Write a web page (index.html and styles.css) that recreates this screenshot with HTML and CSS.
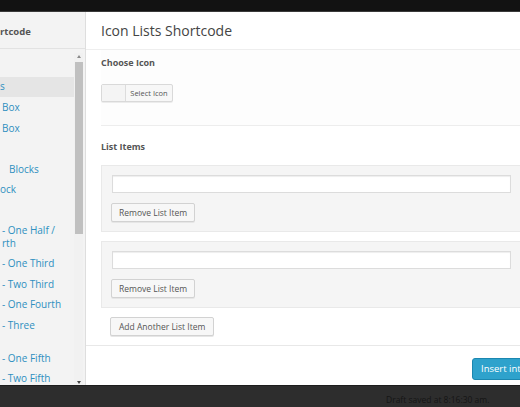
FILE: index.html
```html
<!DOCTYPE html>
<html>
<head>
<meta charset="utf-8">
<link rel="stylesheet" href="styles.css">
</head>
<body>
<div class="topbar"></div>
<div class="modal">
  <aside class="sidebar">
    <div class="side-head">rtcode</div>
    <div class="side-body">
      <ul class="side-list">
        <li class="active">s</li>
        <li class="ind2">Box</li>
        <li class="ind2">Box</li>
        <li>&nbsp;</li>
        <li class="ind9">Blocks</li>
        <li>ock</li>
        <li>&nbsp;</li>
        <li class="ind2">- One Half /<br>rth</li>
        <li class="ind2">- One Third</li>
        <li class="ind2">- Two Third</li>
        <li class="ind2">- One Fourth</li>
        <li class="ind2">- Three<br>&nbsp;</li>
        <li class="ind2">- One Fifth</li>
        <li class="ind2">- Two Fifth</li>
      </ul>
      <div class="scrollbar">
        <span class="arrow up"></span>
        <span class="thumb"></span>
        <span class="arrow down"></span>
      </div>
    </div>
  </aside>
  <main class="main">
    <header class="main-head"><h1 class="title">Icon Lists Shortcode</h1></header>
    <div class="content">
      <section class="section first">
        <div class="label">Choose Icon</div>
        <div class="icon-picker"><span class="icon-preview"></span><span class="icon-btn">Select Icon</span></div>
      </section>
      <section class="section">
        <div class="label">List Items</div>
        <div class="item-box">
          <div class="text-input"></div>
          <button class="btn">Remove List Item</button>
        </div>
        <div class="item-box">
          <div class="text-input"></div>
          <button class="btn">Remove List Item</button>
        </div>
        <button class="btn add">Add Another List Item</button>
      </section>
    </div>
    <footer class="main-foot"><button class="primary">Insert into Post</button></footer>
  </main>
</div>
<div class="bottombar"><span class="draft">Draft saved at 8:16:30 am.</span></div>
</body>
</html>
```
FILE: styles.css
```css
* { box-sizing: border-box; }
html, body { margin: 0; padding: 0; }
body {
  width: 520px;
  height: 407px;
  overflow: hidden;
  background: #2d2d2d;
  font-family: "Open Sans", "DejaVu Sans", sans-serif;
}
.topbar {
  height: 12px;
  background: #121212;
  border-bottom: 1px solid #3a3a3a;
}
.modal {
  height: 373px;
  display: flex;
  background: #fff;
}
.sidebar {
  width: 86px;
  flex: none;
  background: #f3f3f3;
  border-right: 1px solid #dedede;
  display: flex;
  flex-direction: column;
  overflow: hidden;
}
.side-head {
  height: 37px;
  border-bottom: 1px solid #e2e2e2;
  font-size: 9.5px;
  font-weight: 700;
  color: #555;
  line-height: 37px;
  padding-top: 1px;
}
.side-body {
  flex: 1;
  display: flex;
  padding-top: 4px;
}
.side-list {
  list-style: none;
  margin: 0;
  padding: 24px 0 0;
  flex: 1;
  font-size: 10px;
  color: #2e8fc0;
  white-space: nowrap;
}
.side-list li {
  line-height: 12.5px;
  padding: 4px 0;
}
.side-list li.active {
  background: #e5e5e5;
  padding: 3px 0 4px;
  height: 20px;
  line-height: 13px;
}
.ind2 { padding-left: 2px !important; }
.ind9 { padding-left: 9px !important; }
.scrollbar {
  width: 9px;
  margin-right: 2px;
  display: flex;
  flex-direction: column;
  align-items: center;
  background: #f1f1f1;
}
.arrow {
  width: 0;
  height: 0;
  border-left: 2.5px solid transparent;
  border-right: 2.5px solid transparent;
}
.arrow.up { border-bottom: 3px solid #8a8a8a; margin-top: 2px; }
.arrow.down { border-top: 3px solid #444; margin-top: auto; margin-bottom: 5px; }
.thumb {
  width: 8px;
  height: 172px;
  margin-top: 4px;
  background: #c0c0c0;
}
.main {
  flex: 1;
  display: flex;
  flex-direction: column;
  overflow: hidden;
}
.main-head {
  height: 38px;
  border-bottom: 1px solid #eeeeee;
  padding-left: 15px;
  flex: none;
}
.title {
  margin: 0;
  font-size: 14px;
  font-weight: 400;
  color: #444;
  line-height: 38px;
}
.content {
  flex: 1;
  padding-left: 15px;
  overflow: hidden;
}
.section.first {
  padding-top: 6px;
  height: 76px;
  border-bottom: 1px solid #ededed;
  background: #fdfdfd;
}
.label {
  font-size: 9px;
  font-weight: 700;
  color: #555;
  line-height: 14px;
}
.section.first .label { margin-bottom: 14px; }
.section:not(.first) { padding-top: 14px; }
.section:not(.first) .label { margin-bottom: 11px; }
.icon-picker {
  display: flex;
  width: 72px;
  height: 18px;
  border: 1px solid #d9d9d9;
  border-radius: 2px;
  background: #f7f7f7;
  box-shadow: 0 1px 0 #ececec;
}
.icon-preview {
  width: 24px;
  border-right: 1px solid #dcdcdc;
  background: #f4f4f4;
}
.icon-btn {
  flex: 1;
  font-size: 7.5px;
  color: #555;
  line-height: 16px;
  text-align: center;
}
.item-box {
  width: 421px;
  height: 67px;
  background: #f5f5f5;
  border: 1px solid #e9e9e9;
  padding: 9px 10px 0;
  margin-bottom: 9px;
}
.text-input {
  width: 399px;
  height: 18px;
  background: #fff;
  border: 1px solid #dcdcdc;
  box-shadow: inset 0 1px 1px #eee;
  margin-bottom: 10px;
}
.btn {
  display: block;
  height: 19px;
  padding: 0 7px;
  font-family: "Open Sans", "DejaVu Sans", sans-serif;
  font-size: 8.5px;
  color: #555;
  background: #f7f7f7;
  border: 1px solid #d2d2d2;
  border-radius: 2px;
  box-shadow: 0 1px 0 #e6e6e6;
  line-height: 17px;
  margin-left: -1px;
}
.btn.add {
  margin-left: 9px;
  margin-top: 5px;
  padding: 0 8px;
}
.main-foot {
  flex: none;
  height: 40px;
  border-top: 1px solid #e8e8e8;
  padding-left: 386px;
  padding-top: 9px;
}
.primary {
  height: 22px;
  width: 90px;
  padding: 0 0 0 8px;
  text-align: left;
  white-space: nowrap;
  font-family: "Open Sans", "DejaVu Sans", sans-serif;
  font-size: 9.5px;
  color: #fff;
  background: #2ea2cc;
  border: 1px solid #1b87b0;
  border-radius: 3px;
  line-height: 20px;
}
.bottombar {
  height: 22px;
  background: #2d2d2d;
  border-top: 1px solid #1d1d1d;
  padding-left: 386px;
}
.draft {
  font-size: 8.5px;
  color: #151515;
  line-height: 12px;
}
```
